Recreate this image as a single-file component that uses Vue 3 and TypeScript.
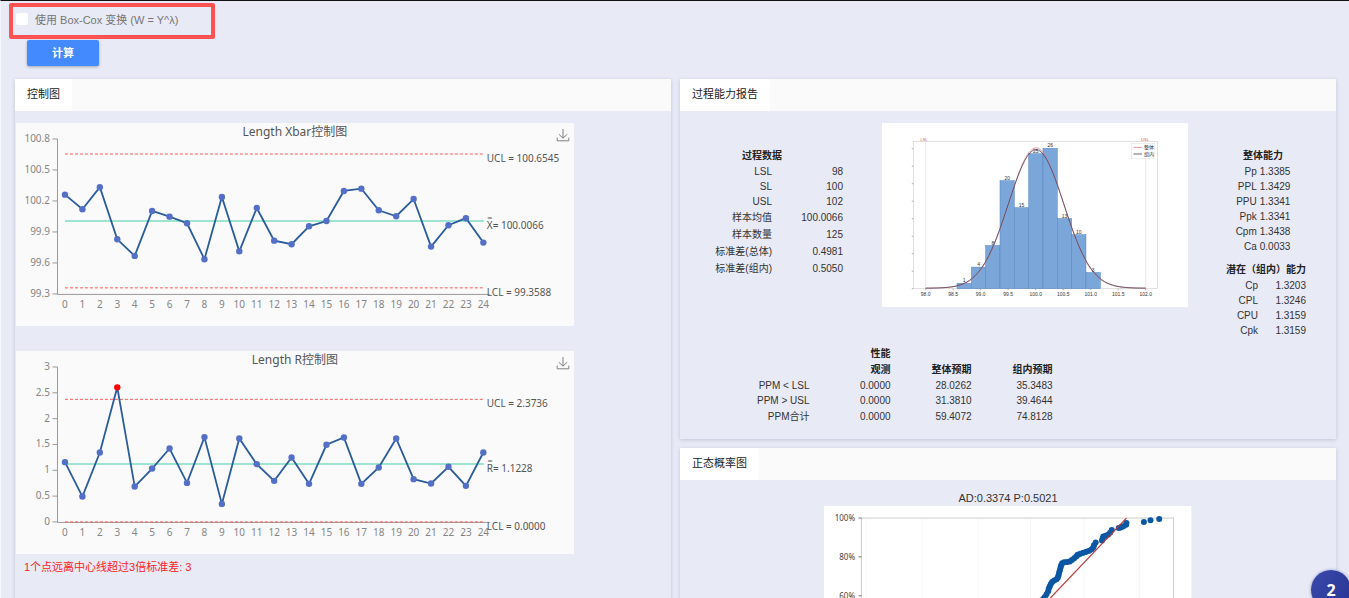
<script setup lang="ts">
import { ref } from 'vue'

interface Limit { label: string; value: number; kind: 'limit' | 'mean' }
interface ControlChart {
  title: string
  min: number
  max: number
  ticks: number[]
  values: number[]
  limits: Limit[]
  outliers: number[]
}

const boxCox = ref(false)

const charts: ControlChart[] = [
  {
    title: 'Length Xbar控制图',
    min: 99.3,
    max: 100.8,
    ticks: [100.8, 100.5, 100.2, 99.9, 99.6, 99.3],
    values: [100.261, 100.12, 100.333, 99.829, 99.668, 100.103, 100.048, 99.984, 99.636, 100.239, 99.713, 100.132, 99.816,
      99.781, 99.955, 100.006, 100.297, 100.319, 100.11, 100.052, 100.219, 99.758, 99.965, 100.033, 99.797],
    limits: [
      { label: 'UCL = 100.6545', value: 100.6545, kind: 'limit' },
      { label: 'X̿= 100.0066', value: 100.0066, kind: 'mean' },
      { label: 'LCL = 99.3588', value: 99.3588, kind: 'limit' },
    ],
    outliers: [],
  },
  {
    title: 'Length R控制图',
    min: 0,
    max: 3,
    ticks: [3, 2.5, 2, 1.5, 1, 0.5, 0],
    values: [1.157, 0.491, 1.345, 2.606, 0.685, 1.034, 1.422, 0.756, 1.642, 0.349, 1.616, 1.119, 0.795,
      1.248, 0.737, 1.494, 1.636, 0.737, 1.054, 1.616, 0.828, 0.744, 1.067, 0.698, 1.345],
    limits: [
      { label: 'UCL = 2.3736', value: 2.3736, kind: 'limit' },
      { label: 'R̿= 1.1228', value: 1.1228, kind: 'mean' },
      { label: 'LCL = 0.0000', value: 0, kind: 'limit' },
    ],
    outliers: [3],
  },
]

const cx = (i: number) => 49 + i * 17.44
const cy = (c: ControlChart, v: number) => 171 - ((v - c.min) / (c.max - c.min)) * 155
const polyline = (c: ControlChart) => c.values.map((v, i) => `${cx(i)},${cy(c, v)}`).join(' ')

const processData = [
  ['LSL', '98'], ['SL', '100'], ['USL', '102'],
  ['样本均值', '100.0066'], ['样本数量', '125'], ['标准差(总体)', '0.4981'], ['标准差(组内)', '0.5050'],
]
const overall = [['Pp', '1.3385'], ['PPL', '1.3429'], ['PPU', '1.3341'], ['Ppk', '1.3341'], ['Cpm', '1.3438'], ['Ca', '0.0033']]
const within = [['Cp', '1.3203'], ['CPL', '1.3246'], ['CPU', '1.3159'], ['Cpk', '1.3159']]
const performance = [
  ['PPM < LSL', '0.0000', '28.0262', '35.3483'],
  ['PPM > USL', '0.0000', '31.3810', '39.4644'],
  ['PPM合计', '0.0000', '59.4072', '74.8128'],
]
const isWide = (s: string) => /[\u4e00-\u9fff]/.test(s)

const counts = [1, 4, 8, 20, 15, 25, 26, 13, 10, 3]
const bars = counts.map((n, i) => ({ n, x: 75 + i * 14.33, y: 165.7 - n * 5.4, h: n * 5.4 }))
const histTicks = Array.from({ length: 9 }, (_, i) => ({ x: 43.7 + i * 27.5, label: (98 + i * 0.5).toFixed(1) }))
function bell(sigma: number, peak: number) {
  const pts: string[] = []
  for (let v = 98; v <= 102.001; v += 0.05) {
    const h = peak * Math.exp(-((v - 100.0066) ** 2) / (2 * sigma * sigma))
    pts.push(`${(43.7 + (v - 98) * 55).toFixed(2)},${(165.2 - h).toFixed(2)}`)
  }
  return pts.join(' ')
}
const bellOverall = bell(0.4981, 140.4)
const bellWithin = bell(0.505, 138.6)

const probPoints: [number, number][] = [
  [217, 94], [218.6, 92.4], [220, 90.7], [221.7, 88], [223.3, 85], [224, 82.3], [225, 80], [226, 77.7], [227.3, 75.7],
  [229.3, 74.3], [231.7, 73], [233, 71.3], [233.7, 69], [234.3, 66.3], [235, 64], [235.7, 61.3], [236.3, 59], [237.3, 57],
  [239.3, 56], [242.3, 55.7], [245, 55.3], [247, 53.7], [249.3, 52], [251.3, 50.3], [252.7, 48.7], [255.3, 47.7],
  [258.3, 46.7], [261.3, 45.7], [264.3, 44.7], [266.7, 43], [268.3, 41.3], [269, 39], [270.7, 36.3], [277, 34.3],
  [277.7, 32.3], [278.3, 30.3], [280.7, 29.7], [283, 28.7], [285, 26.7], [286.7, 24], [293.7, 22], [295.7, 21.3],
  [298.3, 20.3], [301, 18.7], [301.3, 17], [318.7, 16], [325.3, 14.3], [334, 13],
]
const probTicks = [100, 80, 60, 40, 20, 0].map((p, i) => ({ label: `${p}%`, y: 12 + i * 38.7 }))
const probGrid = [41.7, 97.7, 153.3, 205.7, 259, 314.3]
</script>

<template>
  <div class="page">
    <div class="option">
      <label class="check">
        <input v-model="boxCox" type="checkbox" />
        <span>使用 Box-Cox 变换 (W = Y^λ)</span>
      </label>
    </div>
    <button class="calc" type="button">计算</button>

    <main class="columns">
      <section class="card">
        <header class="bar"><h2 class="tab">控制图</h2></header>
        <div class="charts">
          <figure v-for="c in charts" :key="c.title" class="chart">
            <svg viewBox="0 0 558 203" role="img" :aria-label="c.title">
              <text class="title" x="279" y="13">{{ c.title }}</text>
              <path class="axis" d="M41.5 16V171.5H474" />
              <g v-for="t in c.ticks" :key="t">
                <path class="axis" :d="`M36.5 ${cy(c, t)}H41.5`" />
                <text class="tick end" x="34" :y="cy(c, t) + 3">{{ t }}</text>
              </g>
              <text v-for="(_, i) in c.values" :key="i" class="tick mid" :x="cx(i)" y="185">{{ i }}</text>
              <line v-for="l in c.limits" :key="l.label" :class="l.kind" x1="49" x2="468" :y1="cy(c, l.value)" :y2="cy(c, l.value)" />
              <polyline class="series" :points="polyline(c)" />
              <circle
                v-for="(v, i) in c.values" :key="i" r="3.2" :cx="cx(i)" :cy="cy(c, v)"
                :class="c.outliers.includes(i) ? 'dot bad' : 'dot'"
              />
              <text v-for="l in c.limits" :key="l.label" class="note" x="471" :y="cy(c, l.value) + 8">{{ l.label }}</text>
            </svg>
            <button class="save" type="button" aria-label="download">
              <svg viewBox="0 0 14 14"><path d="M7 1V10M2.8 6.2L7 10.2L11.2 6.2M1.2 9.6V12.8H12.8V9.6" /></svg>
            </button>
          </figure>
          <p class="warning">1个点远离中心线超过3倍标准差: 3</p>
        </div>
      </section>

      <div class="stack">
        <section class="card">
          <header class="bar"><h2 class="tab">过程能力报告</h2></header>
          <div class="report">
            <table class="data process">
              <thead><tr><th>过程数据</th><td></td></tr></thead>
              <tbody>
                <tr v-for="r in processData" :key="r[0]" :class="{ wide: isWide(r[0]) }"><td>{{ r[0] }}</td><td>{{ r[1] }}</td></tr>
              </tbody>
            </table>
            <svg class="hist" viewBox="0 0 306 184" role="img" aria-label="直方图">
              <rect width="306" height="184" fill="#fff" />
              <rect class="frame" x="31.3" y="18.5" width="244" height="147.2" />
              <path class="spec" d="M43.7 18.5V165.7M263.7 18.5V165.7" />
              <text class="spectext" x="42" y="17.5">LSL</text>
              <text class="spectext" x="263" y="17.5">USL</text>
              <path v-for="i in 9" :key="i" class="hair" :d="`M29.8 ${183.2 - i * 17.5}H31.3`" />
              <rect v-for="b in bars" :key="b.x" class="col" :x="b.x" :y="b.y" width="14.33" :height="b.h" />
              <polyline class="bell red" :points="bellOverall" />
              <polyline class="bell dark" :points="bellWithin" />
              <text v-for="b in bars" :key="b.x" class="tiny" :x="b.x + 7.2" :y="b.y - 1">{{ b.n }}</text>
              <g v-for="t in histTicks" :key="t.label">
                <path class="hair" :d="`M${t.x} 165.7V167.2`" />
                <text class="tiny" :x="t.x" y="172.5">{{ t.label }}</text>
              </g>
              <rect class="legend" x="249.3" y="20.3" width="23.5" height="15" />
              <path class="bell red" d="M251.5 24.4H260" />
              <path class="bell dark" d="M251.5 31H260" />
              <text class="tiny" x="267" y="26">整体</text>
              <text class="tiny" x="267" y="33">组内</text>
            </svg>
            <div class="ability">
              <table class="data">
                <thead><tr><th colspan="2">整体能力</th></tr></thead>
                <tbody><tr v-for="r in overall" :key="r[0]"><td>{{ r[0] }}</td><td>{{ r[1] }}</td></tr></tbody>
              </table>
              <table class="data inner">
                <thead><tr><th colspan="2">潜在（组内）能力</th></tr></thead>
                <tbody><tr v-for="r in within" :key="r[0]"><td>{{ r[0] }}</td><td>{{ r[1] }}</td></tr></tbody>
              </table>
            </div>
          </div>
          <table class="data perf">
            <thead>
              <tr><td></td><th>性能</th><td></td><td></td></tr>
              <tr><td></td><th>观测</th><th>整体预期</th><th>组内预期</th></tr>
            </thead>
            <tbody>
              <tr v-for="r in performance" :key="r[0]" :class="{ wide: isWide(r[0]) }"><td v-for="(v, i) in r" :key="i">{{ v }}</td></tr>
            </tbody>
          </table>
        </section>

        <section class="card">
          <header class="bar"><h2 class="tab">正态概率图</h2></header>
          <div class="prob">
            <p class="stat">AD:0.3374 P:0.5021</p>
            <svg viewBox="0 0 366 226" role="img" aria-label="正态概率图">
              <rect width="366" height="226" fill="#fff" />
              <path v-for="x in probGrid" :key="x" class="grid" :d="`M${x} 12V205.5`" />
              <rect class="box" x="37.3" y="12" width="311" height="193.5" />
              <g v-for="t in probTicks" :key="t.label">
                <path class="ptick" :d="`M34.3 ${t.y}H37.3`" />
                <text class="ptext" x="31" :y="t.y + 3">{{ t.label }}</text>
              </g>
              <circle v-for="(p, i) in probPoints" :key="i" class="pdot" r="3" :cx="p[0]" :cy="p[1]" />
              <line class="fit" x1="117.7" y1="205" x2="301.3" y2="12" />
            </svg>
          </div>
        </section>
      </div>
    </main>

    <button class="badge" type="button">2</button>
  </div>
</template>

<style>
html,
body {
  margin: 0;
  background: #e8eaf6;
}
</style>

<style scoped>
* {
  box-sizing: border-box;
}
.page {
  position: relative;
  height: 100vh;
  overflow: hidden;
  padding: 2px 13px 0 14px;
  border-top: 1px solid #111;
  border-left: 1px solid #f6f7fc;
  background: #e8eaf6;
  color: #333;
  font-family: "Liberation Sans", "Noto Sans CJK SC", sans-serif;
  font-size: 11px;
}
.option {
  display: flex;
  width: fit-content;
  min-width: 206px;
  height: 36px;
  margin-left: -6px;
  padding: 2px 3px;
  border: 4px solid #ff5252;
  border-radius: 2px;
}
.check {
  display: flex;
  align-items: center;
  gap: 7px;
  height: 20px;
  color: #757575;
}
.check input {
  appearance: none;
  width: 12px;
  height: 12px;
  margin: 0;
  border-radius: 2px;
  background: #fff;
}
.check input:checked {
  background: #448aff;
}
.calc {
  display: block;
  width: 72px;
  height: 26px;
  margin: 1px 0 13px 12px;
  padding: 0 0 2px;
  border: 0;
  border-radius: 2px;
  background: #448aff;
  box-shadow: 0 1px 3px rgba(0, 0, 0, 0.3);
  color: #fff;
  font: bold 11px "Liberation Sans", "Noto Sans CJK SC", sans-serif;
}
.columns {
  display: grid;
  grid-template-columns: 1fr 1fr;
  gap: 9px;
}
.stack {
  display: flex;
  flex-direction: column;
  gap: 9px;
}
.card {
  background: #e8eaf6;
  box-shadow: 0 1px 4px rgba(60, 60, 110, 0.22);
}
.bar {
  display: flex;
  height: 32px;
  background: #fafafa;
}
.tab {
  margin: 0;
  padding: 0 12px;
  background: #fff;
  color: #212121;
  font-size: 11px;
  font-weight: 400;
  line-height: 31px;
}
.charts {
  padding: 12px 0 12px 1px;
}
.chart {
  position: relative;
  width: calc(85% + 1px);
  margin: 0 0 25px;
  background: #fafafa;
}
.chart > svg {
  display: block;
  width: 100%;
  font-family: "Noto Sans", "Noto Sans CJK SC", sans-serif;
}
.title {
  fill: #555;
  font-size: 12px;
  text-anchor: middle;
}
.axis {
  fill: none;
  stroke: #999;
}
.tick {
  fill: #858585;
  font-size: 10px;
}
.end {
  text-anchor: end;
}
.mid {
  text-anchor: middle;
}
.note {
  fill: #555;
  font-size: 10px;
}
.limit {
  stroke: #fa5a5a;
  stroke-dasharray: 3 2;
}
.mean {
  stroke: #7fdcc4;
  stroke-width: 1.6;
}
.series {
  fill: none;
  stroke: #2a5c9c;
  stroke-width: 1.8;
}
.dot {
  fill: #5470c6;
}
.bad {
  fill: #f00;
}
.save {
  position: absolute;
  top: 5px;
  right: 4px;
  width: 14px;
  height: 14px;
  padding: 0;
  border: 0;
  background: none;
}
.save svg {
  display: block;
  fill: none;
  stroke: #808080;
}
.warning {
  margin: -20px 0 0 8px;
  color: #f22;
  line-height: 16px;
}
.report {
  display: grid;
  grid-template-columns: 202fr 306fr 148fr;
  align-items: start;
  padding-top: 12px;
}
.data {
  border-collapse: collapse;
  font-size: 10px;
  line-height: 15px;
}
.data td {
  height: 15px;
  padding: 0;
  text-align: right;
}
.data th {
  height: 16px;
  padding: 0;
  color: #222;
  line-height: 16px;
}
.data .wide td {
  height: 17px;
  line-height: 17px;
}
.process {
  justify-self: end;
  margin: 25px 39px 0 0;
}
.process th {
  text-align: right;
}
.process tbody td:first-child {
  padding-right: 10px;
}
.process td:last-child {
  min-width: 61px;
}
.hist {
  display: block;
  width: 100%;
}
.ability {
  display: flex;
  flex-direction: column;
  align-items: center;
  gap: 8px;
  padding: 25px 0 0 8px;
}
.ability td:last-child {
  padding-left: 3px;
}
.ability table:first-child {
  margin-right: 6px;
}
.ability .inner td:first-child {
  width: 32px;
}
.ability .inner td:last-child {
  width: 48px;
}
.perf {
  margin: 8px 0 0 77px;
  border-bottom: 14px solid transparent;
}
.perf th {
  text-align: right;
}
.perf tr > :not(:first-child) {
  width: 81px;
}
.frame,
.box {
  fill: none;
  stroke: #ccc;
}
.frame {
  stroke-width: 0.6;
}
.spec {
  stroke: #f3c6cb;
  stroke-width: 0.5;
}
.spectext {
  fill: #d0566a;
  font-size: 4px;
  text-anchor: middle;
}
.hair {
  stroke: #777;
  stroke-width: 0.6;
}
.col {
  fill: #7aa6d9;
  stroke: #5584bd;
  stroke-width: 0.5;
}
.bell {
  fill: none;
  stroke-width: 0.8;
}
.red {
  stroke: #d9808a;
}
.dark {
  stroke: #4a4358;
}
.tiny {
  fill: #333;
  font-size: 5px;
  text-anchor: middle;
}
.legend {
  fill: #fff;
  stroke: #ddd;
  stroke-width: 0.5;
}
.prob {
  display: flex;
  flex-direction: column;
  align-items: center;
  padding: 11px 0 12px;
}
.stat {
  margin: 0;
  font-size: 11px;
  line-height: 15px;
}
.prob svg {
  display: block;
  width: 56%;
}
.grid {
  stroke: #f7f7f7;
}
.ptick {
  stroke: #777;
}
.ptext {
  fill: #444;
  font-family: "Noto Sans", sans-serif;
  font-size: 8px;
  text-anchor: end;
}
.pdot {
  fill: #0b57a4;
}
.fit {
  stroke: #b5383c;
  stroke-width: 1.2;
}
.badge {
  position: absolute;
  right: -2px;
  bottom: -12px;
  width: 40px;
  height: 40px;
  padding: 0;
  border: 0;
  border-radius: 50%;
  background: linear-gradient(120deg, #3949ab, #283593);
  box-shadow: 0 0 3px rgba(40, 53, 147, 0.5);
  color: #fff;
  font: bold 16px "Noto Sans", sans-serif;
}
</style>
